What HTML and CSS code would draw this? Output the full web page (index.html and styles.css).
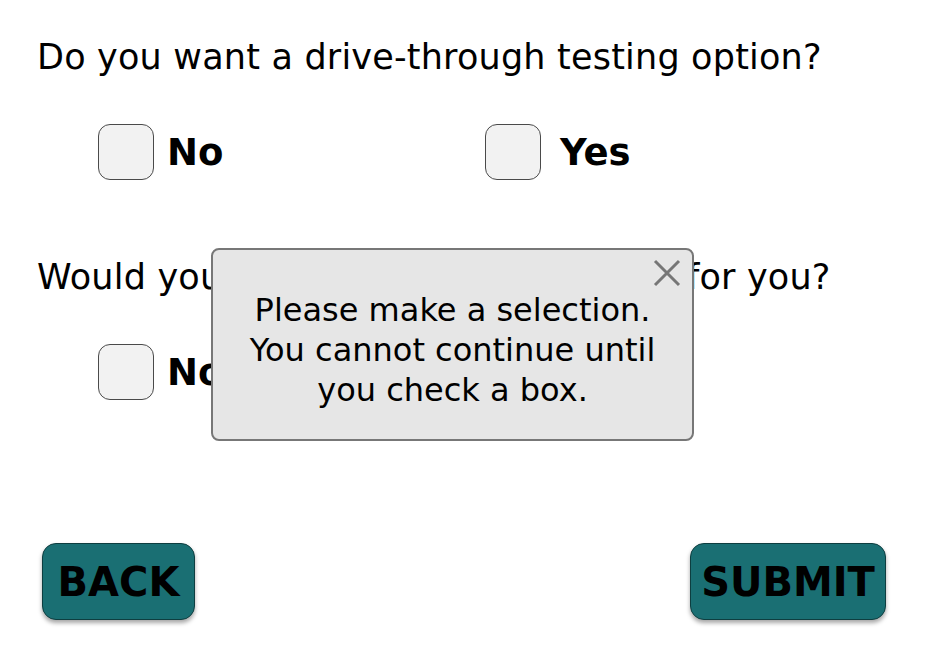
FILE: index.html
```html
<!DOCTYPE html>
<html>
<head>
<meta charset="utf-8">
<link rel="stylesheet" href="styles.css">
</head>
<body>
<main class="page">
  <section class="question q1">
    <h2 class="prompt">Do you want a drive-through testing option?</h2>
    <div class="options">
      <label class="option"><span class="box"></span><span class="opt-label">No</span></label>
      <label class="option"><span class="box"></span><span class="opt-label">Yes</span></label>
    </div>
  </section>
  <section class="question q2">
    <h2 class="prompt">Would you like us to schedule a test for you?</h2>
    <div class="options">
      <label class="option"><span class="box"></span><span class="opt-label">No</span></label>
      <label class="option"><span class="box"></span><span class="opt-label">Yes</span></label>
    </div>
  </section>
  <div class="actions">
    <button class="btn btn-back">BACK</button>
    <button class="btn btn-submit">SUBMIT</button>
  </div>
  <div class="modal">
    <svg class="close" width="28" height="28" viewBox="0 0 28 28"><path d="M2 2 L26 26 M26 2 L2 26" stroke="#767676" stroke-width="3" fill="none"/></svg>
    <p class="modal-text">Please make a selection.<br>You cannot continue until<br>you check a box.</p>
  </div>
</main>
</body>
</html>
```
FILE: styles.css
```css
html, body { margin: 0; padding: 0; background: #fff; }
body { font-family: "DejaVu Sans", sans-serif; color: #000; width: 928px; height: 654px; overflow: hidden; }
.page { position: relative; width: 928px; height: 654px; }
.prompt { margin: 0; font-weight: normal; font-size: 35px; line-height: 40px; padding-left: 37px; letter-spacing: 0.2px; }
.q1 { padding-top: 37px; }
.q2 { padding-top: 77px; }
.options { display: grid; grid-template-columns: 387px auto; padding-left: 98px; margin-top: 47px; }
.option { display: flex; align-items: center; gap: 13px; }
.option + .option { gap: 19px; }
.box { width: 54px; height: 54px; border: 1px solid #4a4a4a; border-radius: 12px; background: #f2f2f2; }
.opt-label { font-weight: bold; font-size: 37px; }
.actions { display: flex; justify-content: space-between; padding: 0 42px; margin-top: 143px; }
.btn { font-family: "DejaVu Sans", sans-serif; font-weight: bold; font-size: 40px; color: #000; background: #1a6f73; border: 1px solid #0e3e40; border-radius: 14px; height: 77px; padding: 0; box-shadow: 0 3px 4px rgba(0,0,0,0.35); }
.btn-back { width: 153px; }
.btn-submit { width: 196px; }
.modal { position: absolute; left: 211px; top: 248px; width: 479px; height: 189px; background: #e6e6e6; border: 2px solid #777; border-radius: 8px; }
.close { position: absolute; right: 11px; top: 9px; }
.modal-text { margin: 0; padding-top: 40px; text-align: center; font-size: 32px; line-height: 40px; }
```
